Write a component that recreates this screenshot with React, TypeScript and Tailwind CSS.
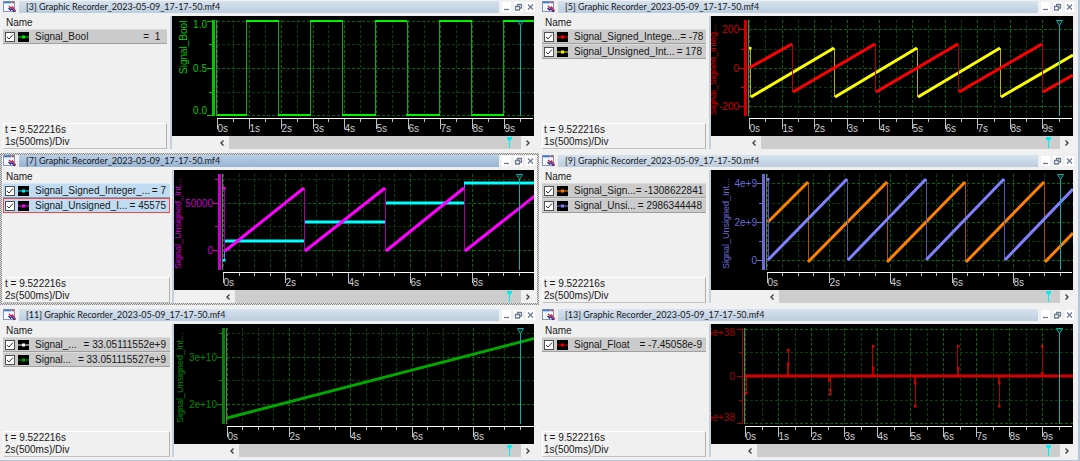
type Trace = {
  color: string;
  edge: string;
  ramps: string;
  drops: string;
  dots?: number[][];
};

type Signal = { name: string; value: string; color: string };

type Recorder = {
  id: number;
  wide?: boolean;
  active?: boolean;
  div: string;
  signals: Signal[];
  axisColor: string;
  axisName?: { text: string; x: number; y: number };
  axisWidth: number;
  labelRight: number;
  labels: { text: string; y: number }[];
  origin: number;
  second: number;
  labelEvery: number;
  rows: { y: number; major: boolean }[];
  traces: Trace[];
};

const FILE = "Graphic Recorder_2023-05-09_17-17-50.mf4";

const FIVE = [
  { y: 5, major: true },
  { y: 28, major: false },
  { y: 52, major: true },
  { y: 76, major: false },
  { y: 99, major: true },
];
const WIDE_FIVE = [
  { y: 13, major: true },
  { y: 33, major: false },
  { y: 52, major: true },
  { y: 71, major: false },
  { y: 90, major: true },
];
const FOUR = [
  { y: 9, major: false },
  { y: 33, major: true },
  { y: 56, major: false },
  { y: 80, major: true },
];

const recorders: Recorder[] = [
  {
    id: 3,
    div: "1s(500ms)/Div",
    signals: [{ name: "Signal_Bool", value: " 1 ", color: "#00e800" }],
    axisColor: "#00c800",
    axisName: { text: "Signal_Bool", x: 15, y: 58 },
    axisWidth: 3,
    labelRight: 35,
    labels: [
      { text: "1.0", y: 8 },
      { text: "0.5", y: 52 },
      { text: "0.0", y: 94 },
    ],
    origin: 45,
    second: 31.85,
    labelEvery: 1,
    rows: FIVE,
    traces: [
      {
        color: "#00f000",
        edge: "#00b400",
        ramps:
          "M45 99H75M74 5H107M106 99H139M138 5H171M170 99H204M203 5H235M234 99H268M267 5H300M299 99H332M331 5H362",
        drops:
          "M74.5 5V99M106.5 5V99M138.5 5V99M170.5 5V99M203.5 5V99M235.5 5V99M267.5 5V99M299.5 5V99M331.5 5V99",
      },
    ],
  },
  {
    id: 5,
    div: "1s(500ms)/Div",
    signals: [
      { name: "Signal_Signed_Intege...", value: "-78", color: "#ff0000" },
      { name: "Signal_Unsigned_Int...", value: "178", color: "#f0f000" },
    ],
    axisColor: "#d00000",
    axisName: { text: "Signal_Signed_Integ...", x: 5, y: 99 },
    axisWidth: 3,
    labelRight: 28,
    labels: [
      { text: "200", y: 13 },
      { text: "0", y: 52 },
      { text: "-200", y: 90 },
    ],
    origin: 38,
    second: 32.6,
    labelEvery: 1,
    rows: WIDE_FIVE,
    traces: [
      {
        color: "#ffff00",
        edge: "#b8b000",
        ramps: "M40 81L123 32M124 81L206 32M207 81L289 32M290 81L362 39",
        drops: "M39.5 32V81M123.5 32V81M206.5 32V81M289.5 32V81",
        dots: [[39, 32]],
      },
      {
        color: "#ff0000",
        edge: "#b00000",
        ramps: "M38 52L81 28M82 76L164 28M165 76L247 28M248 76L331 28M332 76L362 59",
        drops: "M81.5 28V76M164.5 28V76M247.5 28V76M331.5 28V76",
      },
    ],
  },
  {
    id: 7,
    wide: true,
    active: true,
    div: "2s(500ms)/Div",
    signals: [
      { name: "Signal_Signed_Integer_...", value: "7", color: "#00e8f0" },
      { name: "Signal_Unsigned_I...", value: "45575", color: "#ff00ff" },
    ],
    axisColor: "#c800c8",
    axisName: { text: "Signal_Unsigned_Int...", x: 7, y: 99 },
    axisWidth: 3,
    labelRight: 39,
    labels: [
      { text: "50000", y: 33 },
      { text: "0", y: 80 },
    ],
    origin: 49,
    second: 31.15,
    labelEvery: 2,
    rows: FOUR,
    traces: [
      {
        color: "#00ffff",
        edge: "#6080f0",
        ramps: "M50 71H131M130 52H211M211 33H291M290 13H362",
        drops: "M50.5 71V90M130.5 52V71M211.5 33V52M290.5 13V33",
        dots: [[50, 90]],
      },
      {
        color: "#ff00ff",
        edge: "#a000a0",
        ramps: "M51 81L130 18M131 81L211 18M212 81L290 18M291 81L362 25",
        drops: "M50.5 18V81M130.5 18V81M211.5 18V81M290.5 18V81",
        dots: [[50, 18]],
      },
    ],
  },
  {
    id: 9,
    div: "2s(500ms)/Div",
    signals: [
      { name: "Signal_Sign...", value: "-1308622841", color: "#ff8000" },
      { name: "Signal_Unsi...", value: "2986344448", color: "#8080ff" },
    ],
    axisColor: "#6a6ad8",
    axisName: { text: "Signal_Unsigned_Int...", x: 18, y: 99 },
    axisWidth: 3,
    labelRight: 46,
    labels: [
      { text: "4e+9", y: 13 },
      { text: "2e+9", y: 52 },
      { text: "0", y: 90 },
    ],
    origin: 56,
    second: 30.8,
    labelEvery: 2,
    rows: WIDE_FIVE,
    traces: [
      {
        color: "#ff8000",
        edge: "#a85400",
        ramps: "M57 52L97 12M97 92L176 12M176 92L254 12M255 92L333 12M334 92L362 63",
        drops: "M97.5 12V92M176.5 12V92M254.5 12V92M333.5 12V92",
      },
      {
        color: "#8080ff",
        edge: "#5858b0",
        ramps: "M57 90L136 9M137 90L215 9M215 90L293 9M294 90L362 19",
        drops: "M57.5 9V90M136.5 9V90M215.5 9V90M293.5 9V90",
        dots: [[57, 9]],
      },
    ],
  },
  {
    id: 11,
    wide: true,
    div: "2s(500ms)/Div",
    signals: [
      { name: "Signal_...", value: "33.05111552e+9", color: "#ffffff" },
      { name: "Signal...", value: "33.051115527e+9", color: "#00a000" },
    ],
    axisColor: "#008800",
    axisName: { text: "Signal_Unsigned_Int...", x: 9, y: 99 },
    axisWidth: 3,
    labelRight: 43,
    labels: [
      { text: "3e+10", y: 33 },
      { text: "2e+10", y: 80 },
    ],
    origin: 53,
    second: 30.8,
    labelEvery: 2,
    rows: FOUR,
    traces: [{ color: "#00a800", edge: "#00a800", ramps: "M53 94L362 14", drops: "" }],
  },
  {
    id: 13,
    div: "1s(500ms)/Div",
    signals: [{ name: "Signal_Float", value: "-7.45058e-9", color: "#e00000" }],
    axisColor: "#a80000",
    axisWidth: 1,
    labelRight: 24,
    labels: [
      { text: "5e+38", y: 8 },
      { text: "0", y: 52 },
      { text: "5e+38", y: 93 },
    ],
    origin: 34,
    second: 33,
    labelEvery: 1,
    rows: FIVE,
    traces: [
      {
        color: "#d80000",
        edge: "#b00000",
        ramps: "M34 52H362",
        drops:
          "M35.5 52V69M77.5 26V52M76.5 40V52M119.5 52V70M118.5 52V58M161.5 22V52M162.5 43V52M204.5 52V82M203.5 52V60M246.5 22V52M247.5 43V52M288.5 52V82M287.5 52V58M331.5 22V52M330.5 48V52",
        dots: [
          [35, 69], [77, 26], [77, 40], [119, 70], [119, 66], [118, 56], [162, 22], [162, 44],
          [204, 82], [204, 59], [247, 22], [247, 44], [288, 82], [288, 59], [331, 22], [331, 49],
        ],
      },
    ],
  },
];

function WindowIcon() {
  return (
    <svg className="h-[12px] w-[13px] shrink-0" viewBox="0 0 13 12" aria-hidden="true">
      <rect x="0.5" y="0.5" width="11" height="10" fill="#f4f8ff" stroke="#8296b8" />
      <path d="M1 1.5H8" stroke="#3c78c8" strokeWidth="1.6" />
      <path d="M8.5 1.5H11" stroke="#c04848" strokeWidth="1.6" />
      <path d="M5.5 7L7.5 9L9 7.5L11 10.5L12.5 10" fill="none" stroke="#2030a0" strokeWidth="1.4" />
      <path d="M6 5L8 7L9.5 6L12.5 10" fill="none" stroke="#d02848" strokeWidth="1.4" />
    </svg>
  );
}

function CaptionButton({ label, d }: { label: string; d: string }) {
  return (
    <button type="button" aria-label={label} className="h-[10px] w-[9px] shrink-0 bg-white">
      <svg className="block h-[10px] w-[9px]" viewBox="0 0 9 10">
        <path d={d} fill="none" stroke="#6c7c90" strokeWidth="1.3" />
      </svg>
    </button>
  );
}

function SignalRow({ signal, active, focused }: { signal: Signal; active?: boolean; focused: boolean }) {
  const tone = focused
    ? "border border-[#f04848] bg-[#c0dcf3] pr-[3px] pl-px"
    : active
      ? "border-y border-t-[#d8e8f8] border-b-[#8c9cac] bg-[#c0dcf3] pr-[4px] pl-[2px]"
      : "border-y border-t-[#dcdcdc] border-b-[#a0a0a0] bg-[#cbcbcb] pr-[4px] pl-[2px]";
  return (
    <label className={`flex h-[15px] items-center whitespace-pre ${tone}`}>
      <span className="grid shrink-0">
        <input
          type="checkbox"
          defaultChecked
          className="col-start-1 row-start-1 h-[10px] w-[10px] appearance-none border border-[#505050] bg-white"
        />
        <svg className="pointer-events-none col-start-1 row-start-1 h-[10px] w-[10px]" viewBox="0 0 10 10">
          <path d="M2 5L4 7L8 2.5" fill="none" stroke="#303030" />
        </svg>
      </span>
      <svg className="ml-[3px] h-[10px] w-[11px] shrink-0" viewBox="0 0 11 10">
        <rect width="11" height="10" fill="#000" />
        <path d="M0 5H11" stroke={signal.color} />
        <rect x="4" y="3.5" width="3" height="3" fill={signal.color} />
      </svg>
      <span className="ml-[6px]">{signal.name}</span>
      <span className="ml-auto">= {signal.value}</span>
    </label>
  );
}

function Plot({ rec }: { rec: Recorder }) {
  const steps = Array.from({ length: 20 }, (_, i) => i);
  const every = rec.labelEvery * 2;
  const tickX = (i: number) => Math.round(rec.origin + (i * rec.second) / 2) + 0.5;
  const cursor = Math.floor(rec.origin + 9.52 * rec.second) + 0.5;
  const bar = rec.origin - 2 - rec.axisWidth;

  return (
    <svg className="block h-[120px] w-full bg-black text-[10px]" role="img" aria-label={rec.signals[0].name}>
      <g strokeDasharray="3 2">
        {rec.rows.map((r) => (
          <path key={r.y} d={`M${rec.origin} ${r.y + 0.5}H362`} stroke={r.major ? "#006800" : "#004000"} />
        ))}
        {steps.map((i) => (
          <path key={i} d={`M${tickX(i)} 4V100`} stroke={i % every === 0 ? "#006c00" : "#004400"} />
        ))}
      </g>

      <g fill={rec.axisColor} stroke="none">
        <rect x={bar} y="4" width={rec.axisWidth} height="96" />
        {rec.rows.map((r) => (
          <rect key={r.y} x={r.major ? bar - 5 : bar - 3} y={r.y} width={r.major ? 5 : 3} height="1" />
        ))}
        {rec.labels.map((l) => (
          <text key={l.y} x={rec.labelRight} y={l.y + 4} textAnchor="end">
            {l.text}
          </text>
        ))}
        {rec.axisName && (
          <text
            className={rec.axisName.text.length > 12 ? "text-[9px]" : "text-[10px]"}
            transform={`translate(${rec.axisName.x} ${rec.axisName.y}) rotate(-90)`}
          >
            {rec.axisName.text}
          </text>
        )}
      </g>
      <rect x={rec.origin - 1} y="4" width="1" height="96" fill="#707070" />

      {rec.traces.map((t) => (
        <g key={t.color} fill="none">
          <path d={t.drops} stroke={t.edge} />
          <path d={t.ramps} stroke={t.color} strokeWidth={rec.id === 3 ? 2 : 3} />
          {t.dots?.map(([x, y]) => (
            <rect key={`${x}-${y}`} x={x - 1} y={y - 1} width="2.5" height="2.5" fill={t.color} />
          ))}
        </g>
      ))}

      <path
        d={`M${cursor - 3} 4.5H${cursor + 3}L${cursor} 9.5ZM${cursor} 9V100`}
        fill="none"
        stroke="#00b4b4"
      />

      <path d={`M${rec.origin} 102.5H361`} stroke="#fff" />
      {steps.map((i) => (
        <path key={i} d={`M${tickX(i)} 103V${i % every === 0 ? 113 : 106}`} stroke="#c0c0c0" />
      ))}
      {steps
        .filter((i) => i % every === 0)
        .map((i) => (
          <text key={i} x={tickX(i)} y="116" fill="#d0d0d0">
            {i / 2}s
          </text>
        ))}
    </svg>
  );
}

function ScrollBar({ offset }: { offset: number }) {
  return (
    <div className="flex h-[13px] bg-[#f0f0f0]">
      <button
        type="button"
        aria-label="Scroll left"
        className="flex shrink-0 items-center justify-end pr-[5px]"
        style={{ width: offset + 12 }}
      >
        <svg className="h-[6px] w-[4px]" viewBox="0 0 4 6">
          <path d="M3.5 0.5L1 3L3.5 5.5" fill="none" stroke="#404040" strokeWidth="1.4" />
        </svg>
      </button>
      <div className="flex flex-1 justify-end bg-[#cdcdcd] pr-[9px]">
        <svg className="h-[12px] w-[5px]" viewBox="0 0 5 12">
          <path d="M0 1H5V3L3 5V12H2V5L0 3Z" fill="#00f0f0" />
        </svg>
      </div>
      <button type="button" aria-label="Scroll right" className="flex w-[13px] shrink-0 items-center justify-center">
        <svg className="h-[6px] w-[4px]" viewBox="0 0 4 6">
          <path d="M0.5 0.5L3 3L0.5 5.5" fill="none" stroke="#404040" strokeWidth="1.4" />
        </svg>
      </button>
    </div>
  );
}

function RecorderWindow({ rec }: { rec: Recorder }) {
  return (
    <section
      className={`min-w-0 p-[2px] ${
        rec.active
          ? "bg-[repeating-conic-gradient(#8c8c8c_0_25%,#dcdcdc_0_50%)] bg-[length:2px_2px]"
          : "bg-[#f0f0f0]"
      }`}
    >
      <div className="bg-[#f0f0f0]">
        <header className="flex h-[12px] items-center gap-[3px] pr-[2px] pl-px">
          <WindowIcon />
          <h2
            className={`h-[12px] flex-1 truncate bg-linear-to-b pl-[7px] font-[Lato,sans-serif] text-[9px] leading-[12px] ${
              rec.active ? "from-[#b8cee6] to-[#98b4d4]" : "from-[#d6e2ee] to-[#bccddf]"
            }`}
          >
            [{rec.id}] {FILE}
          </h2>
          <CaptionButton label="Minimize" d="M2 7.5H7" />
          <CaptionButton label="Restore" d="M3.5 4V2.5H7.5V6H6M1.5 4.5H5.5V8H1.5Z" />
          <CaptionButton label="Close" d="M2 2.5L7 7.5M7 2.5L2 7.5" />
        </header>

        <div className="flex h-[136px] pt-[3px] pr-[3px] pl-px">
          <div className={`flex shrink-0 flex-col ${rec.wide ? "w-[167px]" : "w-[164px]"}`}>
            <div className="h-[13px] pl-[3px] leading-[13px]">Name</div>
            {rec.signals.map((s, i) => (
              <SignalRow key={s.name} signal={s} active={rec.active} focused={!!rec.active && i === 1} />
            ))}
            <div className="mt-auto border border-t-white border-r-[#b0b0b0] border-b-[#c0c0c0] border-l-white pl-px leading-[12px]">
              <div>t = 9.522216s</div>
              <div>{rec.div}</div>
            </div>
          </div>
          <div className={`w-[2px] shrink-0 bg-[#c4d0e0] ${rec.wide ? "ml-[2px]" : "ml-[3px]"}`} />
          <div className="min-w-0 flex-1">
            <Plot rec={rec} />
            <ScrollBar offset={rec.origin} />
          </div>
        </div>
      </div>
    </section>
  );
}

export default function App() {
  return (
    <main className="overflow-hidden border-r-2 border-b border-[#b4c6dc] bg-[#f0f0f0] pb-px font-['Liberation_Sans',Arial,sans-serif] text-[10px] text-[#181818]">
      <div className="-mt-px grid grid-cols-2 gap-y-[2px]">
        {recorders.map((rec) => (
          <RecorderWindow key={rec.id} rec={rec} />
        ))}
      </div>
    </main>
  );
}
